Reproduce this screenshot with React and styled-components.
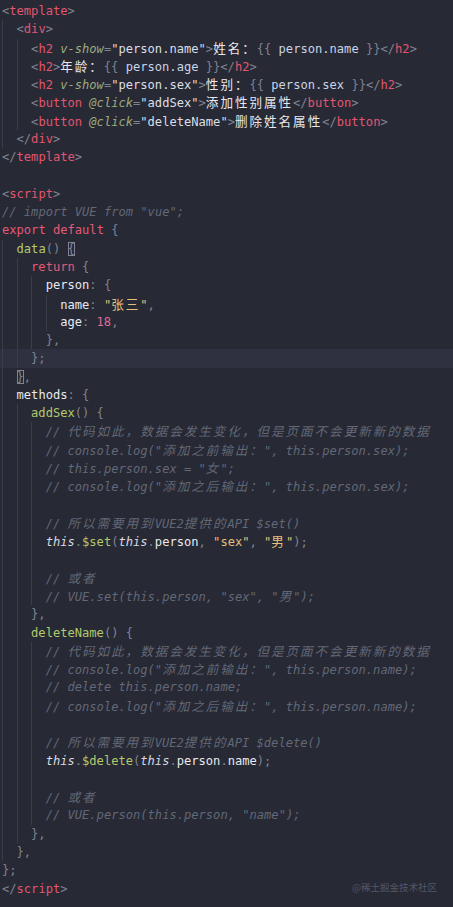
import React from "react";
import styled, { createGlobalStyle, css } from "styled-components";

const GlobalStyle = createGlobalStyle`
  html, body {
    margin: 0;
    padding: 0;
    background: #272935;
  }
`;

const colors = {
  p: "#7f8491",
  tag: "#e2566f",
  attr: "#9dac7c",
  str: "#dcdfe6",
  text: "#e8e8ec",
  v: "#c9d4e6",
  kw: "#e45a78",
  fn: "#b3c96c",
  prop: "#e8e9ee",
  s: "#e5c07b",
  num: "#e06c9a",
  c: "#626876",
  th: "#d7dae2",
};

const italic = ["attr", "c", "th"];

const Editor = styled.div`
  position: relative;
  min-height: 907px;
  padding-top: 2px;
  background: #272935;
  font-family: "DejaVu Sans Mono", "Noto Sans CJK SC", monospace;
  font-size: 12.1px;
  box-sizing: border-box;
`;

const Line = styled.div`
  display: flex;
  height: 18.29px;
  line-height: 18.29px;
  padding-left: 2px;
  white-space: pre;
  ${(p) =>
    p.$current &&
    css`
      background: #2f3140;
    `}
`;

const Indent = styled.span`
  flex: none;
  width: 2ch;
  box-sizing: border-box;
  border-left: 1px solid #3a3d4b;
`;

const Code = styled.span`
  white-space: pre;
`;

const Tok = styled.span`
  color: ${(p) => colors[p.$k] || colors.p};
  font-style: ${(p) => (italic.includes(p.$k) ? "italic" : "normal")};
  ${(p) =>
    p.$box &&
    css`
      box-shadow: inset 0 0 0 1px #80838f;
    `}
`;

const Cjk = styled.span`
  font-family: "Noto Sans CJK SC", sans-serif;
  font-size: 12.6px;
  letter-spacing: 1.94px;
`;

const Watermark = styled.div`
  position: absolute;
  right: 16px;
  bottom: 13px;
  font-family: "Noto Sans CJK SC", sans-serif;
  font-size: 9.5px;
  color: #555866;
`;

const splitCjk = (text) =>
  text
    .split(/([\u3000-\u303f\u4e00-\u9fff\uff00-\uffef]+)/)
    .filter(Boolean)
    .map((part, i) =>
      /[\u3000-\u303f\u4e00-\u9fff\uff00-\uffef]/.test(part) ? (
        <Cjk key={i}>{part}</Cjk>
      ) : (
        part
      )
    );

const lt = (name) => [["p", "<"], ["tag", name]];
const close = (name) => [["p", "</"], ["tag", name], ["p", ">"]];
const cm = (text) => [["c", "// " + text]];

const lines = [
  { i: 0, t: [...lt("template"), ["p", ">"]] },
  { i: 1, t: [...lt("div"), ["p", ">"]] },
  {
    i: 2,
    t: [
      ...lt("h2"),
      ["p", " "],
      ["attr", "v-show"],
      ["p", "="],
      ["str", '"person.name"'],
      ["p", ">"],
      ["text", "姓名："],
      ["p", "{{ "],
      ["v", "person.name"],
      ["p", " }}"],
      ...close("h2"),
    ],
  },
  {
    i: 2,
    t: [
      ...lt("h2"),
      ["p", ">"],
      ["text", "年龄："],
      ["p", "{{ "],
      ["v", "person.age"],
      ["p", " }}"],
      ...close("h2"),
    ],
  },
  {
    i: 2,
    t: [
      ...lt("h2"),
      ["p", " "],
      ["attr", "v-show"],
      ["p", "="],
      ["str", '"person.sex"'],
      ["p", ">"],
      ["text", "性别："],
      ["p", "{{ "],
      ["v", "person.sex"],
      ["p", " }}"],
      ...close("h2"),
    ],
  },
  {
    i: 2,
    t: [
      ...lt("button"),
      ["p", " "],
      ["attr", "@click"],
      ["p", "="],
      ["str", '"addSex"'],
      ["p", ">"],
      ["text", "添加性别属性"],
      ...close("button"),
    ],
  },
  {
    i: 2,
    t: [
      ...lt("button"),
      ["p", " "],
      ["attr", "@click"],
      ["p", "="],
      ["str", '"deleteName"'],
      ["p", ">"],
      ["text", "删除姓名属性"],
      ...close("button"),
    ],
  },
  { i: 1, t: close("div") },
  { i: 0, t: close("template") },
  { i: 0, t: [] },
  { i: 0, t: [...lt("script"), ["p", ">"]] },
  { i: 0, t: cm('import VUE from "vue";') },
  { i: 0, t: [["kw", "export default"], ["p", " {"]] },
  { i: 1, t: [["fn", "data"], ["p", "() "], ["p", "{", true]] },
  { i: 2, t: [["kw", "return"], ["p", " {"]] },
  { i: 3, t: [["prop", "person"], ["p", ": {"]] },
  { i: 4, t: [["prop", "name"], ["p", ": "], ["s", '"张三"'], ["p", ","]] },
  { i: 4, t: [["prop", "age"], ["p", ": "], ["num", "18"], ["p", ","]] },
  { i: 3, t: [["p", "},"]] },
  { i: 2, t: [["p", "};"]], current: true },
  { i: 1, t: [["p", "}", true], ["p", ","]] },
  { i: 1, t: [["prop", "methods"], ["p", ": {"]] },
  { i: 2, t: [["fn", "addSex"], ["p", "() {"]] },
  { i: 3, t: cm("代码如此，数据会发生变化，但是页面不会更新新的数据") },
  { i: 3, t: cm('console.log("添加之前输出：", this.person.sex);') },
  { i: 3, t: cm('this.person.sex = "女";') },
  { i: 3, t: cm('console.log("添加之后输出：", this.person.sex);') },
  { i: 3, t: [] },
  { i: 3, t: cm("所以需要用到VUE2提供的API $set()") },
  {
    i: 3,
    t: [
      ["th", "this"],
      ["p", "."],
      ["fn", "$set"],
      ["p", "("],
      ["th", "this"],
      ["p", "."],
      ["prop", "person"],
      ["p", ", "],
      ["s", '"sex"'],
      ["p", ", "],
      ["s", '"男"'],
      ["p", ");"],
    ],
  },
  { i: 3, t: [] },
  { i: 3, t: cm("或者") },
  { i: 3, t: cm('VUE.set(this.person, "sex", "男");') },
  { i: 2, t: [["p", "},"]] },
  { i: 2, t: [["fn", "deleteName"], ["p", "() {"]] },
  { i: 3, t: cm("代码如此，数据会发生变化，但是页面不会更新新的数据") },
  { i: 3, t: cm('console.log("添加之前输出：", this.person.name);') },
  { i: 3, t: cm("delete this.person.name;") },
  { i: 3, t: cm('console.log("添加之后输出：", this.person.name);') },
  { i: 3, t: [] },
  { i: 3, t: cm("所以需要用到VUE2提供的API $delete()") },
  {
    i: 3,
    t: [
      ["th", "this"],
      ["p", "."],
      ["fn", "$delete"],
      ["p", "("],
      ["th", "this"],
      ["p", "."],
      ["prop", "person"],
      ["p", "."],
      ["prop", "name"],
      ["p", ");"],
    ],
  },
  { i: 3, t: [] },
  { i: 3, t: cm("或者") },
  { i: 3, t: cm('VUE.person(this.person, "name");') },
  { i: 2, t: [["p", "},"]] },
  { i: 1, t: [["p", "},"]] },
  { i: 0, t: [["p", "};"]] },
  { i: 0, t: close("script") },
];

const App = () => {
  return (
    <>
      <GlobalStyle />
      <Editor>
        {lines.map((line, n) => (
          <Line key={n} $current={line.current}>
            {Array.from({ length: line.i }).map((_, k) => (
              <Indent key={k} />
            ))}
            <Code>
              {line.t.map(([kind, text, box], k) => (
                <Tok key={k} $k={kind} $box={box}>
                  {splitCjk(text)}
                </Tok>
              ))}
            </Code>
          </Line>
        ))}
        <Watermark>@稀土掘金技术社区</Watermark>
      </Editor>
    </>
  );
};

export default App;
